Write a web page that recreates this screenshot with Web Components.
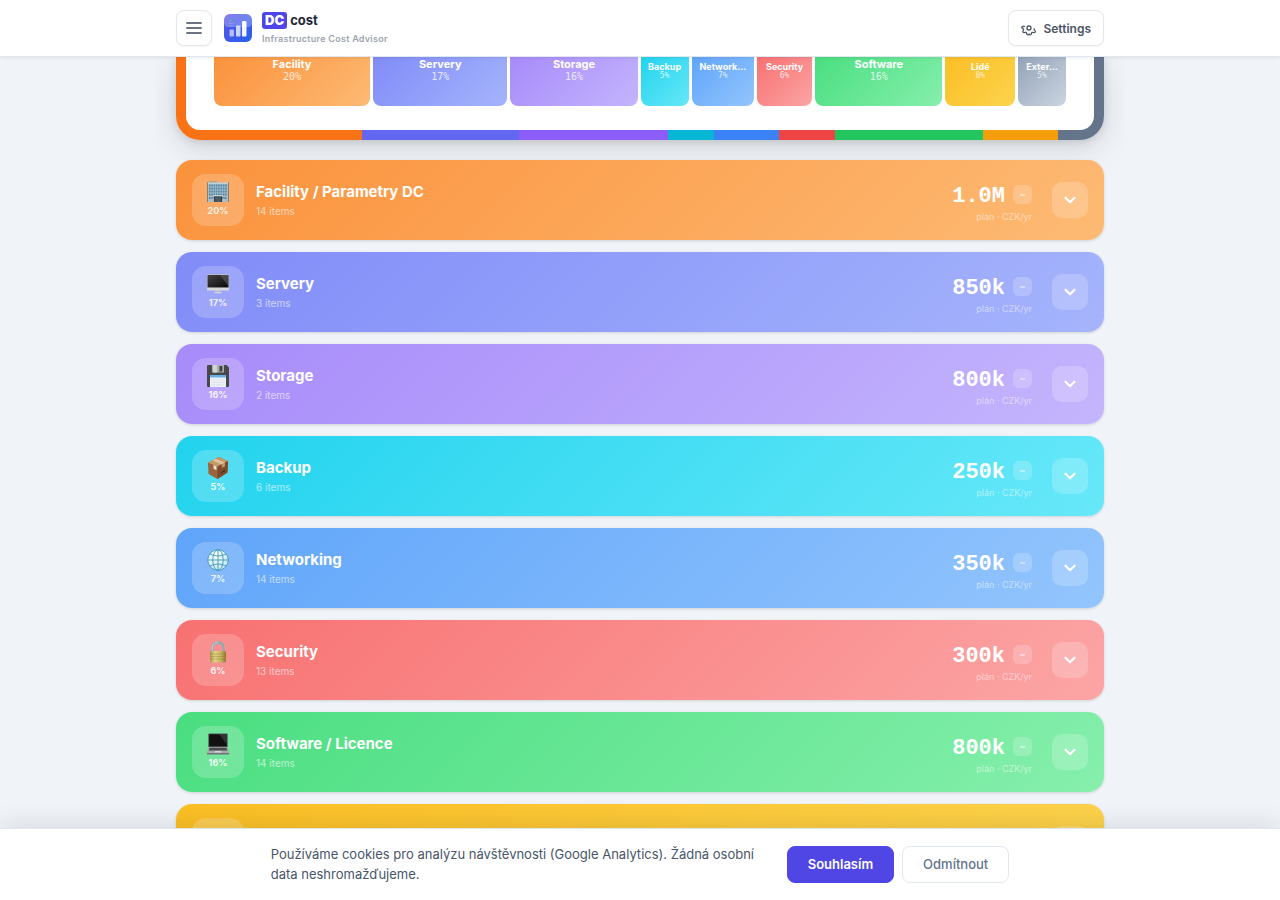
<!DOCTYPE html>
<html lang="cs">
<head>
<meta charset="utf-8">
<title>DC cost</title>
<style>
  * { box-sizing: border-box; }
  body {
    margin: 0;
    height: 100vh;
    overflow: hidden;
    background: #f0f4f8;
    color: #1e293b;
    font-family: Inter, sans-serif;
  }
</style>
</head>
<body>
<cost-app></cost-app>

<template id="app-template">
  <style>
    :host { display: flex; flex-direction: column; height: 100vh; overflow: hidden; }
    main {
      flex: 1;
      min-height: 0;
      overflow: hidden;
      display: flex;
      flex-direction: column;
      gap: 12px;
      width: 100%;
      max-width: 968px;
      margin: 0 auto;
      padding: 0 20px;
      box-sizing: border-box;
    }
    main > * { flex-shrink: 0; }
    cost-map { margin-bottom: 8px; }
  </style>
  <app-header></app-header>
  <main>
    <cost-map></cost-map>
  </main>
  <cookie-bar>Používáme cookies pro analýzu návštěvnosti (Google Analytics). Žádná osobní data neshromažďujeme.</cookie-bar>
</template>

<template id="header-template">
  <style>
    :host {
      display: block;
      position: relative;
      z-index: 2;
      background: #fff;
      border-bottom: 1px solid #e2e8f0;
      box-shadow: 0 1px 3px rgba(0, 0, 0, .08);
    }
    .bar {
      display: flex;
      align-items: center;
      gap: 12px;
      max-width: 968px;
      height: 56px;
      margin: 0 auto;
      padding: 0 20px;
      box-sizing: border-box;
    }
    button {
      display: flex;
      align-items: center;
      justify-content: center;
      gap: 8px;
      height: 36px;
      padding: 0 12px;
      background: #fff;
      border: 1px solid #e5e7eb;
      border-radius: 8px;
      box-shadow: 0 1px 2px rgba(0, 0, 0, .05);
      color: #4b5563;
      font: 600 12px Inter, sans-serif;
      cursor: pointer;
    }
    .menu { width: 36px; padding: 0; color: #6b7280; }
    .brand { flex: 1; display: flex; align-items: center; gap: 10px; }
    .name { display: flex; align-items: center; gap: 3px; font-size: 13px; font-weight: 700; line-height: 17px; color: #1f2937; }
    .name b { padding: 0 3px; border-radius: 3px; background: #4f46e5; color: #fff; }
    .sub { margin-top: 4px; font-size: 9px; line-height: 11px; font-weight: 600; letter-spacing: .03em; color: #9ca3af; }
  </style>
  <div class="bar">
    <button class="menu" aria-label="Menu">
      <svg width="16" height="14" viewBox="0 0 16 14" stroke="currentColor" stroke-width="1.8" stroke-linecap="round"><path d="M1 2h14M1 7h14M1 12h14"/></svg>
    </button>
    <div class="brand">
      <svg width="28" height="28" viewBox="0 0 28 28">
        <defs>
          <linearGradient id="bg" x1="0" y1="0" x2="1" y2="1"><stop offset="0" stop-color="#5b52e8"/><stop offset="1" stop-color="#2563eb"/></linearGradient>
        </defs>
        <rect width="28" height="28" rx="6" fill="url(#bg)"/>
        <path d="M0 6a6 6 0 0 1 6-6h16a6 6 0 0 1 6 6v3q0 4-5 4H5q-5 0-5-4z" fill="#fff" opacity=".25"/>
        <path d="M4.500 9.500h5M4.500 12h5" stroke="#fff" stroke-width=".7" opacity=".25"/>
        <circle cx="7" cy="6.500" r="1" fill="#34d399"/>
        <rect x="5.500" y="15.500" width="4.500" height="7" rx="1" fill="#fff" opacity=".6"/>
        <rect x="12" y="11.500" width="4.500" height="11" rx="1" fill="#fff" opacity=".75"/>
        <rect x="18" y="7" width="4.500" height="15.500" rx="1" fill="#fff" opacity=".95"/>
      </svg>
      <div>
        <div class="name"><b>DC</b><span>cost</span></div>
        <div class="sub">Infrastructure Cost Advisor</div>
      </div>
    </div>
    <button>
      <svg width="14" height="14" viewBox="0 0 14 14" fill="none" stroke="currentColor" stroke-width="1.300" stroke-linecap="round" stroke-linejoin="round" overflow="visible">
        <circle cx="8" cy="7" r="2"/>
        <path d="M3.500 5.300 1.300 5.500Q.3 6.600 1.700 7.300 3 8 2.300 9.400 1.600 10.600 2 11.100 2.700 12 4 11.400 5.300 11 5.600 12.200 5.800 13.900 6.800 13.900 7.600 13.900 8 13 8.500 13.900 9.300 13.900 10.300 13.900 10.500 12.200 10.800 11 12 11.400 13.600 12 14.200 11 14.600 10 13.800 9.500 12.800 9 13.200 7.800"/>
      </svg>
      Settings
    </button>
  </div>
</template>

<template id="map-template">
  <style>
    :host {
      display: block;
      padding: 0 10px 10px;
      border-radius: 0 0 24px 24px;
      background: var(--frame);
      box-shadow: 0 8px 32px rgba(0, 0, 0, .13), 0 2px 8px rgba(0, 0, 0, .12);
    }
    .inner {
      display: flex;
      gap: 3px;
      padding: 0 28px 24px;
      background: #fff;
      border-radius: 0 0 14px 14px;
    }
  </style>
  <div class="inner"></div>
</template>

<template id="tile-template">
  <style>
    :host {
      display: block;
      min-width: 0;
      height: 49px;
      box-sizing: border-box;
      padding: 1px 6px 0;
      border-radius: 0 0 8px 8px;
      text-align: center;
      color: #fff;
      overflow: hidden;
    }
    .label { font-size: 11px; line-height: 13px; font-weight: 700; white-space: nowrap; overflow: hidden; text-overflow: ellipsis; }
    .pct { font: 10px/11px "DejaVu Sans Mono", monospace; opacity: .75; }
    :host([small]) { padding-top: 4px; }
    :host([small]) .label { font-size: 9px; line-height: 11px; }
    :host([small]) .pct { font-size: 8px; line-height: 8px; }
  </style>
  <div class="label"><slot></slot></div>
  <div class="pct"><slot name="pct"></slot></div>
</template>

<template id="row-template">
  <style>
    :host {
      display: flex;
      align-items: center;
      gap: 12px;
      height: 80px;
      padding: 0 16px;
      box-sizing: border-box;
      border-radius: 16px;
      color: #fff;
      box-shadow: 0 1px 3px rgba(0, 0, 0, .14);
    }
    .badge {
      display: flex;
      flex-direction: column;
      align-items: center;
      justify-content: center;
      gap: 2px;
      width: 52px;
      height: 52px;
      padding-bottom: 2px;
      box-sizing: border-box;
      border-radius: 14px;
      background: rgba(255, 255, 255, .2);
    }
    .icon { display: flex; width: 22px; height: 22px; }
    .pct { font-size: 9px; line-height: 12px; font-weight: 700; opacity: .85; }
    .text { flex: 1; }
    h2 { margin: 0; font-size: 15px; line-height: 20px; font-weight: 700; }
    .items { margin-top: 1px; font-size: 10px; line-height: 16px; opacity: .6; }
    .cost { display: flex; flex-direction: column; align-items: flex-end; gap: 2px; margin-right: 8px; padding-top: 2px; }
    .line { display: flex; align-items: center; gap: 8px; }
    .value { padding-top: 6px; font: 700 22px/24px "Liberation Mono", monospace; }
    .tag { width: 19px; height: 19px; border-radius: 6px; background: rgba(255, 255, 255, .2); font-size: 9px; line-height: 19px; font-weight: 600; text-align: center; color: rgba(255, 255, 255, .75); }
    .unit { font-size: 9px; line-height: 12px; opacity: .5; }
    button {
      display: flex;
      align-items: center;
      justify-content: center;
      width: 36px;
      height: 36px;
      padding: 0;
      border: 0;
      border-radius: 10px;
      background: rgba(255, 255, 255, .2);
      color: #fff;
      cursor: pointer;
    }
    :host([pending]) .text ~ .cost,
    :host([pending]) .badge > * { display: none; }
  </style>
  <div class="badge">
    <span class="icon"></span>
    <span class="pct"></span>
  </div>
  <div class="text">
    <h2><slot></slot></h2>
    <div class="items"></div>
  </div>
  <div class="cost">
    <div class="line"><span class="value"></span><span class="tag">~</span></div>
    <span class="unit">plán · CZK/yr</span>
  </div>
  <button aria-label="Expand">
    <svg width="18" height="18" viewBox="0 0 24 24" fill="none" stroke="currentColor" stroke-width="3" stroke-linecap="round" stroke-linejoin="round"><path d="M6 9l6 6 6-6"/></svg>
  </button>
</template>

<template id="cookie-template">
  <style>
    :host {
      display: flex;
      align-items: center;
      justify-content: center;
      gap: 16px;
      position: relative;
      z-index: 2;
      padding: 15px 24px 16px;
      background: #fff;
      border-top: 1px solid #e2e8f0;
      box-shadow: 0 -4px 24px rgba(0, 0, 0, .1);
    }
    p { flex: 0 1 500px; margin: 0; font-size: 13px; line-height: 20px; color: #475569; }
    .actions { display: flex; gap: 8px; }
    button {
      height: 37px;
      padding: 0 20px;
      border: 1px solid #4f46e5;
      border-radius: 8px;
      background: #4f46e5;
      color: #fff;
      font: 600 13px Inter, sans-serif;
      cursor: pointer;
    }
    .no { background: #fff; border-color: #e2e8f0; color: #64748b; font-weight: 500; }
  </style>
  <p><slot></slot></p>
  <div class="actions">
    <button>Souhlasím</button>
    <button class="no">Odmítnout</button>
  </div>
</template>

<script>
const svg = (body) => `<svg width="22" height="22" viewBox="0 0 22 22">${body}</svg>`;

const icons = {
  facility: svg(`
    <rect x="2" y="0.500" width="8" height="2" fill="#7f97a3"/>
    <rect x="0.500" y="1.500" width="21" height="19.500" fill="#a9bcc4"/>
    <path d="M0.500 1.500h21v1.500h-21z" fill="#c6d0d2"/>
    <path d="M2 4.500h18M2 7.500h18M2 10.500h18M2 13.500h18M2 17h5M15 17h5" stroke="#4f87ad" stroke-width="1.900" stroke-dasharray="1.600 .700"/>
    <path d="M0.500 1.500v19.500M21.500 1.500v19.500" stroke="#796f63" stroke-width=".8"/>
    <path d="M7 15h8v6H7z" fill="#343a3f"/>
    <path d="M9 16v5M11 16v5M13 16v5" stroke="#7796a8" stroke-width=".7"/>
    <path d="M6.500 14.800h9" stroke="#e1e4e3" stroke-width="1"/>`),
  servery: svg(`
    <defs><linearGradient id="g" x1="0" y1="0" x2="1" y2="1"><stop offset="0" stop-color="#444"/><stop offset="1" stop-color="#080808"/></linearGradient></defs>
    <path d="M9 17h4l.5 2.500h-5z" fill="#b8bbbe"/>
    <rect x="7.500" y="19" width="7" height="1.200" rx=".5" fill="#d5d7d9"/>
    <rect y="1.500" width="22" height="16" rx=".8" fill="#d5d7da"/>
    <path d="M0 2.200q0-.7.800-.7h20.400q.8 0 .8.700V14.500H0z" fill="#b0b4b7"/>
    <rect x=".6" y="2" width="20.800" height="12.400" fill="url(#g)"/>
    <path d="M13 2h8.400v11z" fill="#777" opacity=".45"/>`),
  storage: svg(`
    <path d="M1 0h18.500L22 2.500V21q0 1-1 1H1q-1 0-1-1V1q0-1 1-1z" fill="#46484a"/>
    <path d="M5 0h12v7.500H5z" fill="#a8adb0"/>
    <path d="M6 0h4v7.500H6z" fill="#d2d5d6"/>
    <rect x="12.500" y="1" width="2.800" height="5.500" fill="#3d4042"/>
    <rect x="3" y="10" width="16" height="12" fill="#eef2f6"/>
    <path d="M3 10h16v2.500H3z" fill="#69aee5"/>
    <path d="M4 15h14M4 17.500h14M4 20h14" stroke="#cbd5dd" stroke-width=".5"/>`),
  backup: svg(`
    <path d="M1 5.500 12 0l9 4-.5 11.500L10.500 22 1.500 17z" fill="#9a653b"/>
    <path d="M1 5.500 12 0l9 4-10.500 5.500z" fill="#c79a6b"/>
    <path d="M10.500 9.500 21 4l-.5 11.500L10.500 22z" fill="#7d4b2b"/>
    <path d="m5.500 3.200 3-1.500 9.500 4-3.200 1.700z" fill="#e1c39c"/>
    <path d="m14.800 7.400 3.200-1.700v3.500l-3.200 1.800z" fill="#c3966a"/>
    <path d="m6.500 8 3 1.300v4l-3-1.500z" fill="#e8e2da"/>
    <path d="m14 16 4-2.300" stroke="#3e2718" stroke-width="1"/>`),
  networking: svg(`
    <defs><radialGradient id="w" cx=".4" cy=".3" r=".8"><stop offset="0" stop-color="#fff"/><stop offset="1" stop-color="#b9e1ec"/></radialGradient></defs>
    <circle cx="11" cy="11" r="10.300" fill="url(#w)"/>
    <g fill="none" stroke="#4098b8" stroke-width=".9">
      <circle cx="11" cy="11" r="10.300"/>
      <ellipse cx="11" cy="11" rx="5.200" ry="10.300"/>
      <path d="M11 .7v20.600M.7 11h20.600M3 5q8 4 16 0M3 17q8-4 16 0"/>
    </g>`),
  security: svg(`
    <defs><linearGradient id="l"><stop offset="0" stop-color="#a99541"/><stop offset=".3" stop-color="#dfd28a"/><stop offset=".7" stop-color="#c5b35b"/><stop offset="1" stop-color="#8d7930"/></linearGradient></defs>
    <path d="M5.500 11V7.500q0-6 5.500-6t5.500 6V11" fill="none" stroke="#8eabb6" stroke-width="2.300"/>
    <path d="M5.200 11V7.500q0-6 5.800-6" fill="none" stroke="#c9dbe0" stroke-width=".8"/>
    <rect x="3" y="10" width="16" height="11.500" rx="1.500" fill="url(#l)"/>
    <path d="M3 13h16M3 15.500h16M3 18h16" stroke="#8d7930" stroke-width=".6" opacity=".6"/>`),
  software: svg(`
    <path d="M2 .5h18q.7 0 .7.700V14H1.300V1.200Q1.300.5 2 .5z" fill="#53575a"/>
    <rect x="2.200" y="1.300" width="17.600" height="12" fill="#111"/>
    <path d="M12 1.300h7.800v10z" fill="#4b4b4b" opacity=".6"/>
    <path d="M1.500 14h19l1.500 6H0z" fill="#a6a9ab"/>
    <path d="M2.500 14.700h17l.7 2.800H1.800z" fill="#484b4d"/>
    <path d="M8 18h6l.4 1.500H7.600z" fill="#d2d4d5"/>
    <path d="M0 20h22v1.500H0z" fill="#6f7376"/>`),
};

const categories = [
  { name: 'Facility / Parametry DC', short: 'Facility', icon: 'facility', pct: 20, items: 14, value: '1.0M', cost: 1000, colors: ['#f97316', '#fb923c', '#fdba74'] },
  { name: 'Servery', short: 'Servery', icon: 'servery', pct: 17, items: 3, value: '850k', cost: 850, colors: ['#6366f1', '#818cf8', '#a5b4fc'] },
  { name: 'Storage', short: 'Storage', icon: 'storage', pct: 16, items: 2, value: '800k', cost: 800, colors: ['#8b5cf6', '#a78bfa', '#c4b5fd'] },
  { name: 'Backup', short: 'Backup', icon: 'backup', pct: 5, items: 6, value: '250k', cost: 250, colors: ['#06b6d4', '#22d3ee', '#67e8f9'] },
  { name: 'Networking', short: 'Network…', icon: 'networking', pct: 7, items: 14, value: '350k', cost: 350, colors: ['#3b82f6', '#60a5fa', '#93c5fd'] },
  { name: 'Security', short: 'Security', icon: 'security', pct: 6, items: 13, value: '300k', cost: 300, colors: ['#ef4444', '#f87171', '#fca5a5'] },
  { name: 'Software / Licence', short: 'Software', icon: 'software', pct: 16, items: 14, value: '800k', cost: 800, colors: ['#22c55e', '#4ade80', '#86efac'] },
  { short: 'Lidé', pct: 8, cost: 400, colors: ['#f59e0b', '#fbbf24', '#fcd34d'] },
  { short: 'Exter…', pct: 5, cost: 250, colors: ['#64748b', '#94a3b8', '#cbd5e1'] },
];

const gradient = (c) => `linear-gradient(135deg, ${c.colors[1]}, ${c.colors[2]})`;

// shared shadow root setup
class BaseElement extends HTMLElement {
  constructor(templateId) {
    super();
    this.attachShadow({ mode: 'open' });
    this.shadowRoot.appendChild(document.getElementById(templateId).content.cloneNode(true));
  }
}

class AppHeader extends BaseElement {
  constructor() { super('header-template'); }
}

class CookieBar extends BaseElement {
  constructor() { super('cookie-template'); }
}

class CostTile extends BaseElement {
  constructor() { super('tile-template'); }
}

class CostMap extends BaseElement {
  constructor() { super('map-template'); }

  connectedCallback() {
    const inner = this.shadowRoot.querySelector('.inner');
    const total = categories.reduce((sum, c) => sum + c.cost, 0);
    let from = 0;
    const stops = [];
    categories.forEach((c) => {
      const to = from + (c.cost / total) * 100;
      stops.push(`${c.colors[0]} ${from}% ${to}%`);
      from = to;

      const tile = document.createElement('cost-tile');
      tile.style.flex = `${c.cost} 1 0`;
      tile.style.background = gradient(c);
      if (c.cost < 500) tile.setAttribute('small', '');
      tile.innerHTML = `${c.short}<span slot="pct">${c.pct}%</span>`;
      inner.appendChild(tile);
    });
    this.style.setProperty('--frame', `linear-gradient(90deg, ${stops.join(', ')})`);
  }
}

class CostRow extends BaseElement {
  constructor() { super('row-template'); }

  connectedCallback() {
    if (this.hasAttribute('pending')) return;
    const root = this.shadowRoot;
    root.querySelector('.icon').innerHTML = icons[this.getAttribute('icon')];
    root.querySelector('.pct').textContent = this.getAttribute('pct') + '%';
    root.querySelector('.items').textContent = this.getAttribute('items') + ' items';
    root.querySelector('.value').textContent = this.getAttribute('value');
  }
}

class CostApp extends BaseElement {
  constructor() {
    super('app-template');
    const main = this.shadowRoot.querySelector('main');
    categories.slice(0, 8).forEach((c) => {
      const row = document.createElement('cost-row');
      row.style.background = gradient(c);
      if (c.name) {
        ['icon', 'pct', 'items', 'value'].forEach((key) => row.setAttribute(key, c[key]));
        row.textContent = c.name;
      } else {
        row.setAttribute('pending', '');
      }
      main.appendChild(row);
    });
  }
}

customElements.define('app-header', AppHeader);
customElements.define('cookie-bar', CookieBar);
customElements.define('cost-tile', CostTile);
customElements.define('cost-map', CostMap);
customElements.define('cost-row', CostRow);
customElements.define('cost-app', CostApp);
</script>
</body>
</html>
